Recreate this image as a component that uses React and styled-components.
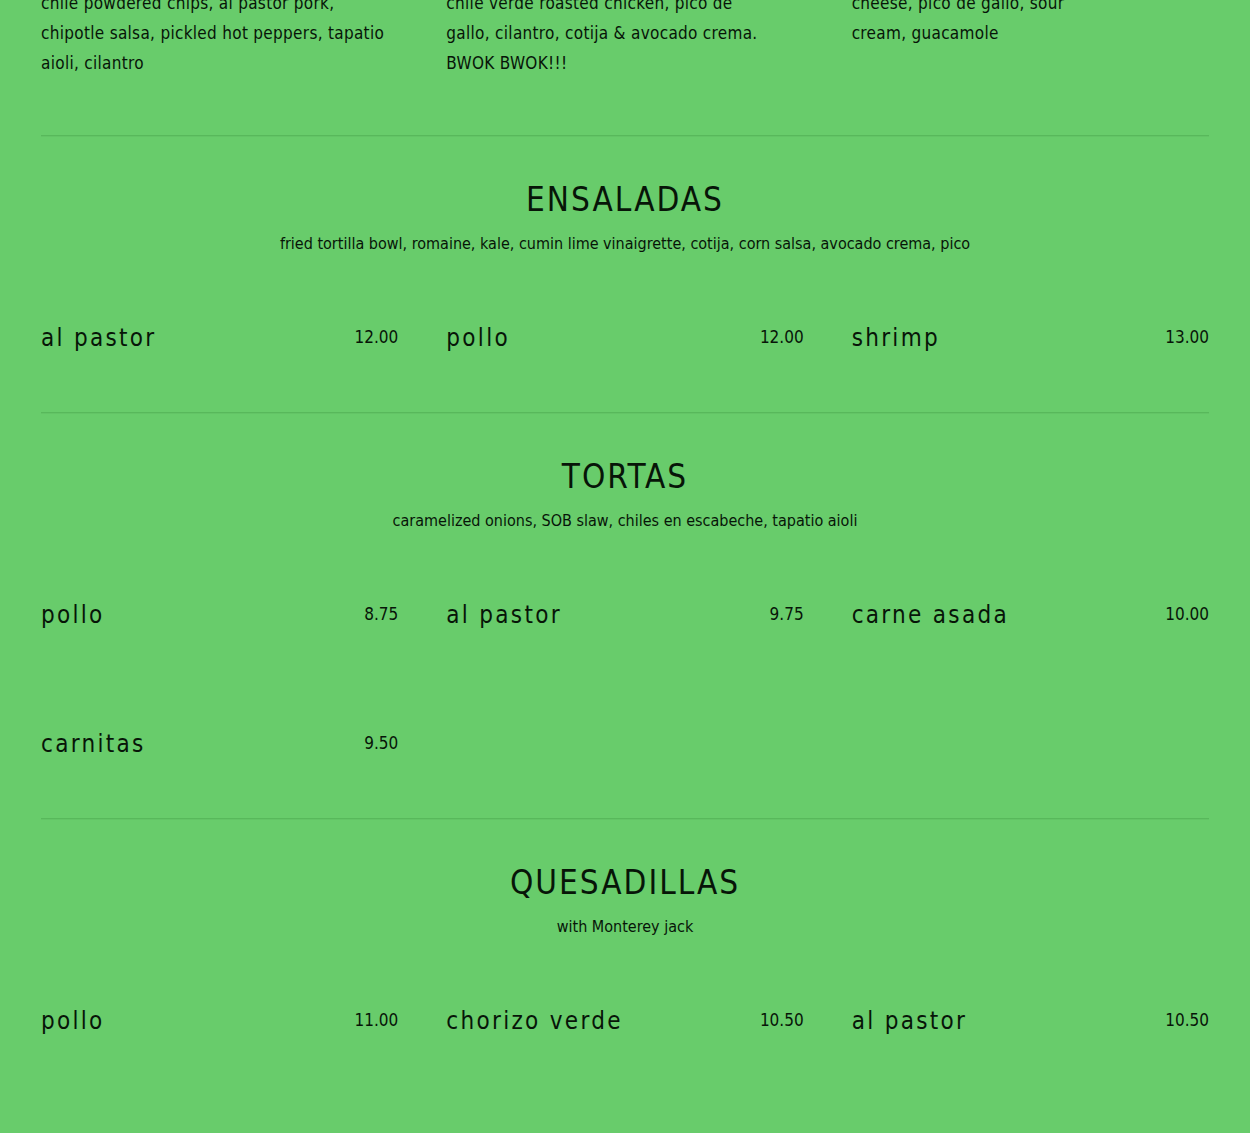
import styled, { createGlobalStyle } from "styled-components";

const GlobalStyle = createGlobalStyle`
  body {
    margin: 0;
    background: #68cc6b;
    color: #071508;
    font-family: "DejaVu Sans Condensed", "Liberation Sans Narrow", "Liberation Sans", sans-serif;
  }
`

const Page = styled.div`
  margin-top: -12px;
  padding: 0 41px;
`
const Section = styled.section`
  padding: ${props => props.$first ? '0' : '40px'} 0 54px;
  border-top: ${props => props.$first ? 'none' : '1px solid #58b85b'};
  box-shadow: ${props => props.$first ? 'none' : 'inset 0 1px 0 rgba(0, 0, 0, 0.04)'};
`
const Title = styled.h2`
  margin: 0;
  font-size: 33px;
  font-weight: 400;
  line-height: 48px;
  letter-spacing: 2px;
  text-align: center;
`
const Subtitle = styled.p`
  margin: 8px 0 0;
  font-size: 16px;
  line-height: 24px;
  text-align: center;
`
const Grid = styled.div`
  display: grid;
  grid-template-columns: repeat(3, 1fr);
  column-gap: 48px;
  row-gap: 89px;
  margin-top: ${props => props.$flush ? '0' : '62px'};
`
const Item = styled.div`
  display: flex;
  flex-direction: column;
`
const NameRow = styled.div`
  display: flex;
  justify-content: space-between;
  align-items: center;
  height: 40px;
`
const Name = styled.h3`
  margin: 0;
  font-size: 24px;
  font-weight: 400;
  letter-spacing: 2.3px;
`
const Price = styled.span`
  font-size: 17px;
  margin-top: -2px;
`
const Desc = styled.p`
  margin: 0 0 3px;
  font-size: 17px;
  line-height: 30px;
  letter-spacing: 0.3px;
`
const Line = styled.span`
  display: block;
  white-space: nowrap;
`

const previous = [
  ['chile powdered chips, al pastor pork,', 'chipotle salsa, pickled hot peppers, tapatio', 'aioli, cilantro'],
  ['chile verde roasted chicken, pico de', 'gallo, cilantro, cotija & avocado crema.', 'BWOK BWOK!!!'],
  ['cheese, pico de gallo, sour', 'cream, guacamole'],
]

const sections = [
  {
    title: 'ENSALADAS',
    note: 'fried tortilla bowl, romaine, kale, cumin lime vinaigrette, cotija, corn salsa, avocado crema, pico',
    items: [['al pastor', '12.00'], ['pollo', '12.00'], ['shrimp', '13.00']],
  },
  {
    title: 'TORTAS',
    note: 'caramelized onions, SOB slaw, chiles en escabeche, tapatio aioli',
    items: [['pollo', '8.75'], ['al pastor', '9.75'], ['carne asada', '10.00'], ['carnitas', '9.50']],
  },
  {
    title: 'QUESADILLAS',
    note: 'with Monterey jack',
    items: [['pollo', '11.00'], ['chorizo verde', '10.50'], ['al pastor', '10.50']],
  },
]

export default function App() {
  return (
    <Page>
      <GlobalStyle />
      <Section $first>
        <Grid $flush>
          {previous.map((lines, i) => (
            <Item key={i}>
              <Desc>
                {lines.map((l, j) => <Line key={j}>{l}</Line>)}
              </Desc>
            </Item>
          ))}
        </Grid>
      </Section>
      {sections.map(s => (
        <Section key={s.title}>
          <Title>{s.title}</Title>
          <Subtitle>{s.note}</Subtitle>
          <Grid>
            {s.items.map(([name, price]) => (
              <Item key={name}>
                <NameRow>
                  <Name>{name}</Name>
                  <Price>{price}</Price>
                </NameRow>
              </Item>
            ))}
          </Grid>
        </Section>
      ))}
    </Page>
  )
}
